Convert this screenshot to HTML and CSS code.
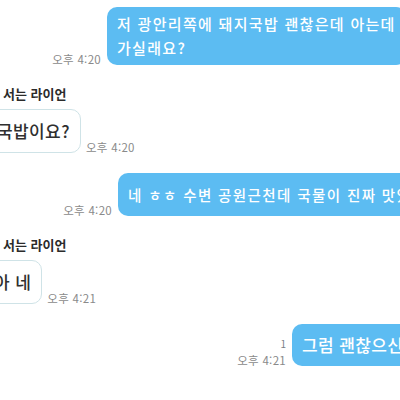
FILE: index.html
```html
<!DOCTYPE html>
<html lang="ko">
<head>
    <meta charset="UTF-8">
    <meta name="viewport" content="width=device-width, initial-scale=1.0">
    <title>채팅</title>
    <link rel="stylesheet" href="styles.css">
</head>
<body>
    <div class="chat">
        <!-- 내가 보낸 메시지 -->
        <div class="row mine row-1">
            <div class="meta">
                <span class="time">오후 4:20</span>
            </div>
            <div class="bubble blue size-md">저 광안리쪽에 돼지국밥 괜찮은데 아는데<br>가실래요?</div>
        </div>

        <!-- 상대방 메시지 -->
        <div class="group">
            <div class="name">서는 라이언</div>
            <div class="row theirs">
                <div class="bubble white size-lg shift-1">국밥이요?</div>
                <div class="meta">
                    <span class="time">오후 4:20</span>
                </div>
            </div>
        </div>

        <div class="row mine row-3">
            <div class="meta">
                <span class="time">오후 4:20</span>
            </div>
            <div class="bubble blue size-sm">네 ㅎㅎ 수변 공원근천데 국물이 진짜 맛있어요</div>
        </div>

        <div class="group">
            <div class="name">서는 라이언</div>
            <div class="row theirs">
                <div class="bubble white size-lg shift-2">아 네</div>
                <div class="meta">
                    <span class="time">오후 4:21</span>
                </div>
            </div>
        </div>

        <div class="row mine row-5">
            <div class="meta">
                <span class="unread">1</span>
                <span class="time">오후 4:21</span>
            </div>
            <div class="bubble blue size-lg">그럼 괜찮으신가요?</div>
        </div>
    </div>
</body>
</html>
```

FILE: styles.css
```css
body {
    margin: 0;
    background-color: #ffffff;
    font-family: 'Noto Sans CJK KR', 'Noto Sans', sans-serif;
    overflow: hidden;
    width: 400px;
    height: 400px;
}

.chat {
    display: flex;
    flex-direction: column;
    gap: 20px;
    padding-top: 7px;
}

.row {
    display: flex;
    align-items: flex-end;
}

.row.mine .meta {
    width: 50px;
    margin-right: 6px;
    align-items: flex-end;
    flex-shrink: 0;
}

.row.theirs .meta {
    margin-left: 5px;
}

.row-1 {
    padding-left: 51px;
}

.row-3 {
    padding-left: 62px;
}

.row-5 {
    padding-left: 236px;
}

.meta {
    display: flex;
    flex-direction: column;
    margin-bottom: -1px;
}

.time {
    font-size: 11.5px;
    line-height: 13px;
    letter-spacing: 0.3px;
    color: #8a8a8a;
    white-space: nowrap;
}

.unread {
    font-size: 10px;
    line-height: 12px;
    color: #7a7f86;
    margin-bottom: 4px;
}

.bubble {
    flex-shrink: 0;
    white-space: nowrap;
    border-radius: 10px;
    line-height: 24px;
    padding: 9px 10px;
    font-weight: 500;
}

.bubble.blue {
    background-color: #5cbcf2;
    color: #ffffff;
}

.bubble.white {
    background-color: #ffffff;
    color: #2f2f2f;
    border: 1.5px solid #cfe3e7;
}

.size-md {
    font-size: 15px;
    letter-spacing: 1.3px;
    padding: 5px 10px;
}

.size-sm {
    font-size: 14.5px;
    letter-spacing: 1.4px;
    padding: 10px 10px 9px;
}

.size-lg {
    font-size: 17px;
    letter-spacing: 0.4px;
}

.shift-1 {
    margin-left: -14px;
}

.shift-2 {
    margin-left: -17px;
}

.name {
    font-size: 13px;
    line-height: 18px;
    font-weight: 700;
    color: #2b2b2b;
    padding-left: 3px;
    margin-bottom: 6px;
}
```
